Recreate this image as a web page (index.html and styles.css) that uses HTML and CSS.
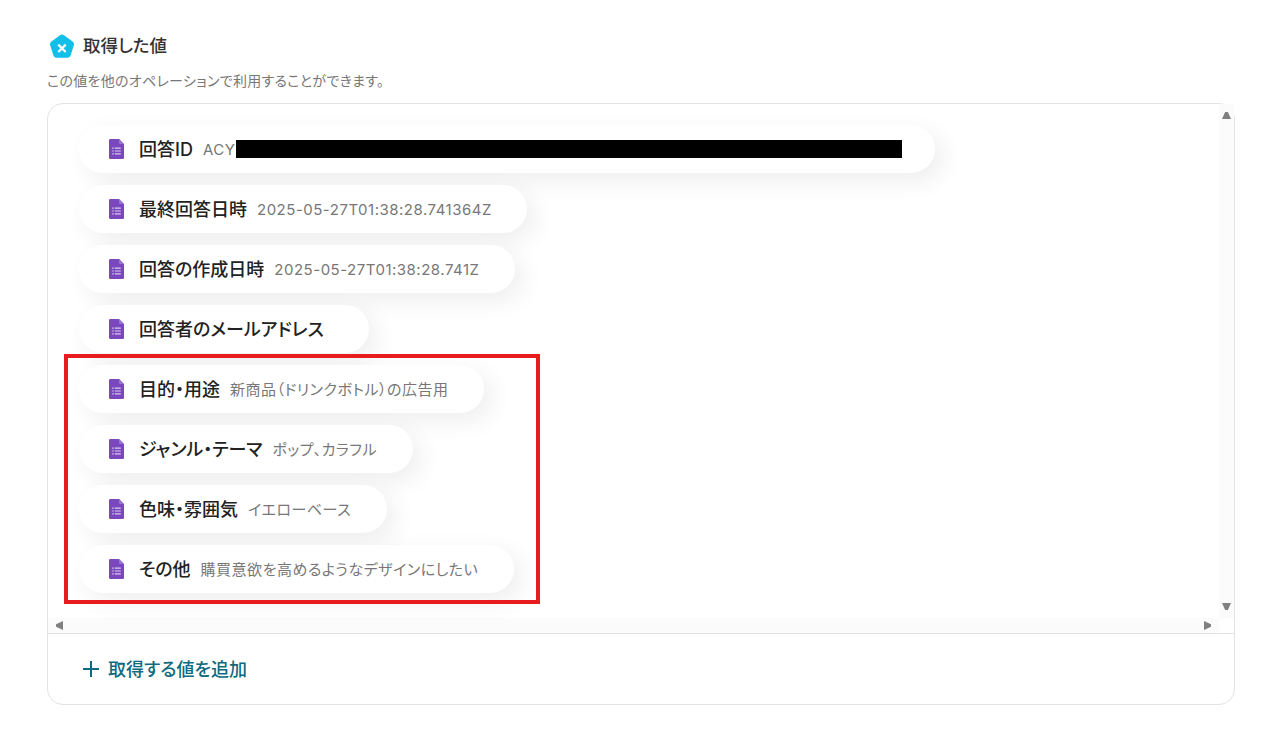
FILE: index.html
```html
<!DOCTYPE html>
<html lang="ja">
<head>
<meta charset="utf-8">
<title>取得した値</title>
<link rel="stylesheet" href="styles.css">
</head>
<body>
<main class="page">
  <header class="head">
    <svg class="logo" viewBox="0 0 26 26" aria-hidden="true">
      <path d="M11 1.3a3.4 3.4 0 0 1 4 0l8.600 6.200a3.400 3.400 0 0 1 1.200 3.800l-3.200 10.100a3.400 3.400 0 0 1-3.200 2.400H7.600a3.400 3.400 0 0 1-3.200-2.400L1.200 11.300a3.400 3.400 0 0 1 1.200-3.800z" fill="#12bfe8"/>
      <path d="M9.300 10.600l7.400 7.400M16.700 10.600l-7.400 7.400" stroke="#fff" stroke-width="2.200" fill="none"/>
    </svg>
    <h1 class="title">取得した値</h1>
  </header>
  <p class="desc">この値を他のオペレーションで利用することができます。</p>
  <section class="panel">
    <div class="scroller">
      <ul class="list">
        <li class="pill w1"><svg class="doc"><use href="#form"/></svg><b class="key">回答ID</b><span class="val">ACY</span><span class="redact"></span></li>
        <li class="pill w2"><svg class="doc"><use href="#form"/></svg><b class="key">最終回答日時</b><span class="val">2025-05-27T01:38:28.741364Z</span></li>
        <li class="pill w3"><svg class="doc"><use href="#form"/></svg><b class="key">回答の作成日時</b><span class="val">2025-05-27T01:38:28.741Z</span></li>
        <li class="pill w4"><svg class="doc"><use href="#form"/></svg><b class="key">回答者のメールアドレス</b></li>
        <li class="pill w5"><svg class="doc"><use href="#form"/></svg><b class="key">目的・用途</b><span class="val">新商品（ドリンクボトル）の広告用</span></li>
        <li class="pill w6"><svg class="doc"><use href="#form"/></svg><b class="key">ジャンル・テーマ</b><span class="val">ポップ、カラフル</span></li>
        <li class="pill w7"><svg class="doc"><use href="#form"/></svg><b class="key">色味・雰囲気</b><span class="val">イエローベース</span></li>
        <li class="pill w8"><svg class="doc"><use href="#form"/></svg><b class="key">その他</b><span class="val">購買意欲を高めるようなデザインにしたい</span></li>
      </ul>
      <div class="vbar"><i class="arrow up"></i><i class="arrow down"></i></div>
      <div class="hbar"><i class="arrow left"></i><i class="arrow right"></i></div>
      <div class="mark"></div>
    </div>
    <footer class="foot">
      <svg class="plus" viewBox="0 0 16 16" aria-hidden="true"><path d="M8 0v16M0 8h16" stroke="#0f6a80" stroke-width="2" fill="none"/></svg>
      <span class="add">取得する値を追加</span>
    </footer>
  </section>
</main>
<svg class="defs" aria-hidden="true">
  <symbol id="form" viewBox="0 0 15 20">
    <path d="M1.300 0H10l5 5v13.700a1.300 1.300 0 0 1-1.300 1.300H1.300A1.300 1.300 0 0 1 0 18.700V1.300A1.300 1.300 0 0 1 1.300 0z" fill="#7a47bf"/>
    <path d="M10 0l5 5h-3.700A1.300 1.300 0 0 1 10 3.700z" fill="#9a75d0"/>
    <path d="M5.800 9.200h6M5.800 12h6M5.800 14.800h6M3.200 9.200h1.500M3.200 12h1.500M3.200 14.800h1.500" stroke="#d9ccf0" stroke-width="1.200"/>
  </symbol>
</svg>
</body>
</html>
```
FILE: styles.css
```css
* { box-sizing: border-box; }
html, body { margin: 0; padding: 0; background: #fff; }
body {
  font-family: Inter, "Noto Sans CJK JP", sans-serif;
  font-feature-settings: "palt";
  color: #2b2b2b;
  overflow: hidden;
}
.page { width: 1285px; height: 742px; padding: 33px 50px 0 47px; }
.head { display: flex; align-items: flex-start; gap: 8px; height: 27px; padding-left: 2px; }
.logo { width: 26px; height: 26px; flex: none; margin-top: 1px; }
.title { margin: 1px 0 0; font-size: 17.5px; font-weight: 500; line-height: 24px; color: #333; }
.desc { margin: 12px 0 0; font-size: 14px; line-height: 18px; color: #777; letter-spacing: .3px; }
.panel {
  margin-top: 13px;
  height: 602px;
  border: 1px solid #e3e3e3;
  border-radius: 16px;
  display: flex;
  flex-direction: column;
}
.scroller {
  position: relative;
  height: 530px;
  flex: none;
  display: grid;
  grid-template-columns: 1fr 15px;
  grid-template-rows: 1fr 15px;
  border-bottom: 1px solid #e3e3e3;
}
.list { list-style: none; margin: 0; padding: 21px 0 0 31px; display: flex; flex-direction: column; gap: 12px; }
.pill {
  height: 48px;
  flex: none;
  display: flex;
  align-items: center;
  padding-left: 30px;
  background: #fff;
  border-radius: 24px;
  box-shadow: 8px 8px 24px rgba(0, 0, 0, .07);
}
.w1 { width: 856px; } .w2 { width: 448px; } .w3 { width: 436px; } .w4 { width: 290px; }
.w5 { width: 405px; } .w6 { width: 334px; } .w7 { width: 308px; } .w8 { width: 435px; }
.doc { width: 15px; height: 20px; flex: none; margin-right: 15px; }
.key { padding-top: 2px; font-size: 18px; font-weight: 500; color: #222; line-height: 24px; white-space: nowrap; }
.val { margin-left: 10px; padding-top: 1px; font-size: 15px; color: #777; line-height: 20px; white-space: nowrap; letter-spacing: .5px; }
.redact { width: 666px; height: 18px; margin-left: 1px; background: #000; flex: none; }
.vbar { position: relative; background: #fbfbfb; grid-row: 1; grid-column: 2; }
.hbar { position: relative; background: rgba(0, 0, 0, .015); grid-row: 2; grid-column: 1; }
.arrow { position: absolute; background: #808080; }
.up, .down { left: 3px; width: 9px; height: 7px; }
.left, .right { top: 3px; width: 7px; height: 9px; }
.up { top: 8px; clip-path: polygon(35% 0, 65% 0, 100% 100%, 0 100%); }
.down { bottom: 8px; clip-path: polygon(0 0, 100% 0, 65% 100%, 35% 100%); }
.left { left: 8px; clip-path: polygon(0 35%, 100% 0, 100% 100%, 0 65%); }
.right { right: 8px; clip-path: polygon(0 0, 100% 35%, 100% 65%, 0 100%); }
.mark { position: absolute; left: 16px; top: 250px; width: 476px; height: 250px; border: 4px solid #e81c1c; pointer-events: none; }
.foot { flex: 1; display: flex; align-items: center; padding-left: 35px; gap: 9px; }
.plus { width: 16px; height: 16px; flex: none; }
.add { padding-top: 1px; font-size: 18px; font-weight: 500; color: #0f6a80; line-height: 24px; }
.defs { position: absolute; width: 0; height: 0; }
```
